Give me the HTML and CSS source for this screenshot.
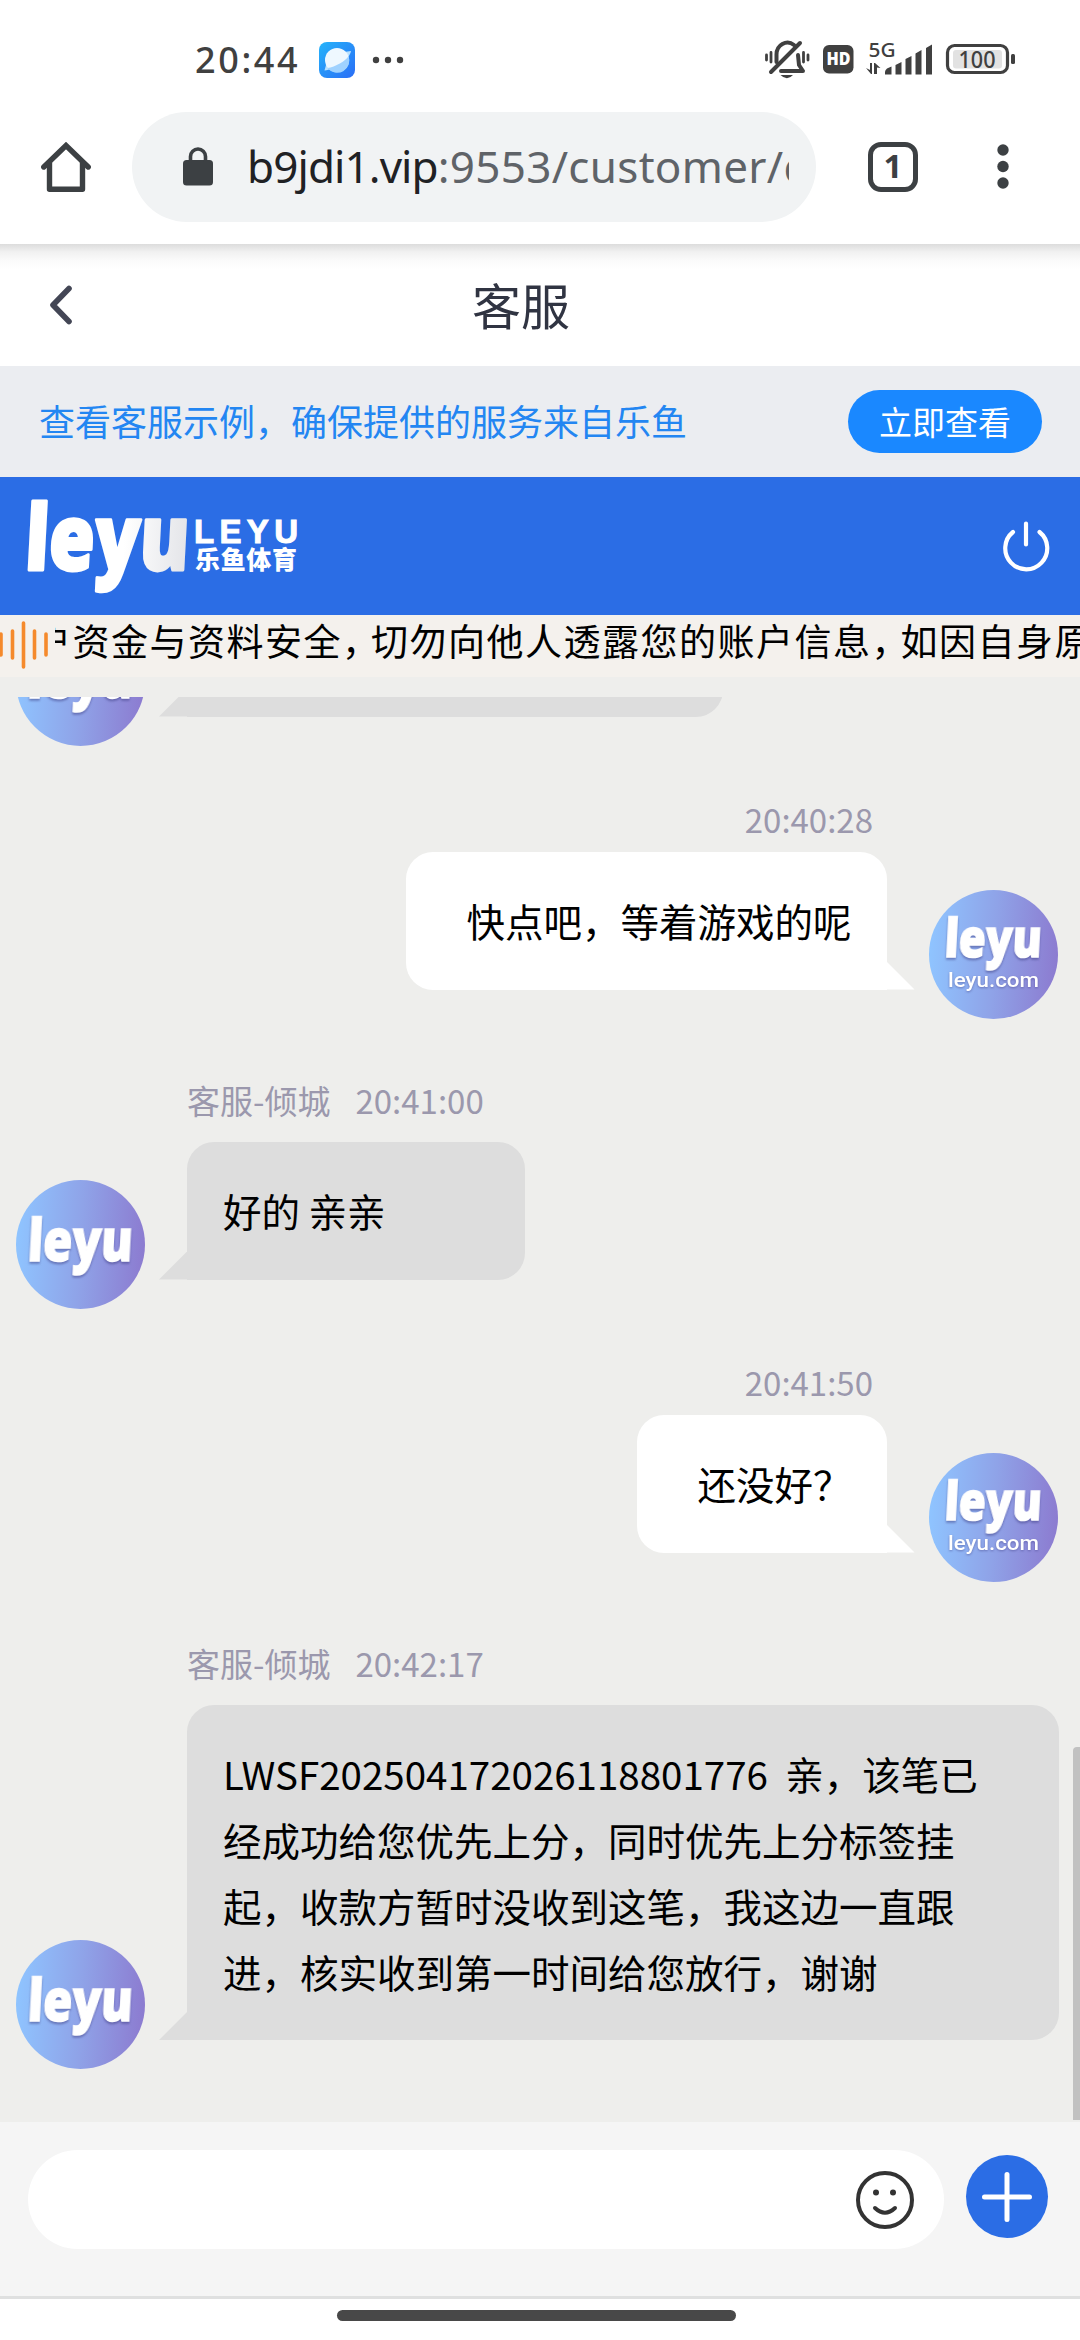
FILE: index.html
```html
<!DOCTYPE html>
<html lang="zh-CN">
<head>
<meta charset="utf-8">
<title>客服</title>
<link rel="stylesheet" href="styles.css">
</head>
<body>
<svg class="defs" width="0" height="0" aria-hidden="true">
  <defs>
    <linearGradient id="avatar-fill" x1="0" y1="0.5" x2="1" y2="0.56">
      <stop offset="0" stop-color="#8fc4ff"/>
      <stop offset="0.5" stop-color="#8fa3e8"/>
      <stop offset="1" stop-color="#8c7bd0"/>
    </linearGradient>
    <linearGradient id="app-fill" x1="0" y1="0" x2="1" y2="1">
      <stop offset="0" stop-color="#25b4fa"/>
      <stop offset="1" stop-color="#2a6df6"/>
    </linearGradient>
    <symbol id="avatar-agent" viewBox="0 0 129 129">
      <circle cx="64.5" cy="64.5" r="64.5" fill="url(#avatar-fill)"/>
      <g transform="translate(11 81) skewX(-3)"><text class="brand" font-size="58" textLength="105" lengthAdjust="spacingAndGlyphs">leyu</text></g>
    </symbol>
    <symbol id="avatar-user" viewBox="0 0 129 129">
      <circle cx="64.5" cy="64.5" r="64.5" fill="url(#avatar-fill)"/>
      <g transform="translate(15 67) skewX(-3)"><text class="brand" font-size="53" textLength="97" lengthAdjust="spacingAndGlyphs">leyu</text></g>
      <text class="brand-domain" x="19" y="97" font-size="21" textLength="91" lengthAdjust="spacingAndGlyphs">leyu.com</text>
    </symbol>
  </defs>
</svg>
<div class="screen">
  <header class="browser">
    <div class="status">
      <div class="status-left">
        <span class="clock">20:44</span>
        <svg class="app-icon" width="36" height="36" viewBox="0 0 36 36">
          <rect width="36" height="36" rx="8" fill="url(#app-fill)"/>
          <path d="M25 10L32 9C31 17 15 28 5.500 28.500L7 23Z" fill="#b9e1ff"/>
          <circle cx="18" cy="18" r="12" fill="#eef8ff"/>
          <path d="M8.500 26C16 25 27 19 29.500 14A12.200 12.200 0 0 1 8.500 26Z" fill="#9fd2ff"/>
        </svg>
        <svg width="32" height="8" viewBox="0 0 32 8" fill="#404040"><circle cx="4" cy="4" r="3.200"/><circle cx="16" cy="4" r="3.200"/><circle cx="28" cy="4" r="3.200"/></svg>
      </div>
      <svg class="status-right" width="252" height="40" viewBox="764 40 252 40" fill="#404040">
        <g fill="none" stroke="#404040" stroke-linecap="round" stroke-linejoin="round">
          <path d="M800 43L771 72" stroke-width="4"/>
          <path d="M776.500 62V55A11 12 0 0 1 794 45" stroke-width="4"/>
          <path d="M781 71H803L799 65L798 55" stroke-width="4"/>
          <path d="M766.500 55V60M771 52.500V62M803.500 52.500V62M808 55V60" stroke-width="2.800"/>
        </g>
        <path d="M780.500 75H793Q787 81.500 780.500 75Z"/>
        <rect x="823" y="45" width="30.500" height="28.500" rx="6"/>
        <text class="hd" x="826.500" y="65" textLength="24" lengthAdjust="spacingAndGlyphs">HD</text>
        <text class="net" x="868.500" y="57" textLength="27" lengthAdjust="spacingAndGlyphs">5G</text>
        <path d="M866 68L870 70V63H872V74H871ZM874 63H875L880.500 68L877 67.500V74H874ZM885 72Q885 70 887 68.500L891.500 66.500V74.500H885ZM895.500 65L901.500 62V74.500H895.500ZM905.500 59L911.500 56V74.500H905.500ZM915.500 53.500L921.500 50V74.500H915.500ZM926 48L932 44.500V74.500H926Z"/>
        <rect x="947.500" y="45.500" width="60" height="27" rx="7" fill="none" stroke="#404040" stroke-width="3.200"/>
        <rect x="953" y="50" width="49" height="18.500" rx="3" fill="#e2e2e2"/>
        <rect x="1011" y="54" width="4" height="10" rx="1.500"/>
        <text class="level" x="958.500" y="67.500" textLength="37" lengthAdjust="spacingAndGlyphs">100</text>
      </svg>
    </div>
    <div class="toolbar">
      <svg class="home" width="50" height="50" viewBox="0 0 50 50" fill="none" stroke="#3c4043" stroke-width="5.400" stroke-linejoin="round" stroke-linecap="round"><path d="M2.800 25L25 3.500L47.200 25" stroke-linejoin="miter"/><path d="M8.500 21V47.200H41.500V21"/></svg>
      <div class="omnibox">
        <svg width="30" height="39" viewBox="0 0 30 39"><rect y="13" width="30" height="25.500" rx="3.500" fill="#3c4043"/><path d="M7.500 15V9.500A7.500 7.500 0 0 1 22.500 9.500V15" fill="none" stroke="#3c4043" stroke-width="3.600"/></svg>
        <div class="url"><span class="host">b9jdi1.vip</span><span class="rest">:9553/customer/c</span></div>
      </div>
      <div class="tabs">1</div>
      <svg class="menu" width="12" height="46" viewBox="0 0 12 46" fill="#3c4043"><circle cx="6" cy="6" r="5.700"/><circle cx="6" cy="22.500" r="5.700"/><circle cx="6" cy="39" r="5.700"/></svg>
    </div>
  </header>

  <nav class="page-nav">
    <svg width="24" height="40" viewBox="0 0 24 40" fill="none" stroke="#434655" stroke-width="5.600" stroke-linecap="round" stroke-linejoin="round"><path d="M20 3.500L4 20L20 36.500"/></svg>
    <h1>客服</h1>
  </nav>

  <section class="verify">
    <p>查看客服示例，确保提供的服务来自乐鱼</p>
    <button type="button">立即查看</button>
  </section>

  <section class="brandbar">
    <svg class="logo" width="272" height="100" viewBox="26 496 272 100">
      <defs><linearGradient id="logo-fill"><stop offset="0" stop-color="#fff"/><stop offset="0.600" stop-color="#fff"/><stop offset="1" stop-color="#e3e4e8"/></linearGradient></defs>
      <g transform="translate(24 569.500) skewX(-3)"><text class="logo-word" font-size="91" textLength="164" lengthAdjust="spacingAndGlyphs" fill="url(#logo-fill)" stroke="url(#logo-fill)">leyu</text></g>
      <text class="logo-latin" x="194" y="543" textLength="104" lengthAdjust="spacing">LEYU</text>
      <text class="logo-cjk" x="195" y="569" textLength="102" lengthAdjust="spacing">乐鱼体育</text>
    </svg>
    <svg class="power" width="50" height="52" viewBox="0 0 50 52" fill="none" stroke="#fff" stroke-width="4.200" stroke-linecap="round"><path d="M25 3.500V24.500M12 12A21 21 0 1 0 38.500 12"/></svg>
  </section>

  <section class="notice">
    <svg width="50" height="48" viewBox="0 0 50 48" stroke="#f58a2c" stroke-width="3.600" stroke-linecap="round"><path d="M1 13V34M12.500 10V37M23.500 2V46M34.500 10V37M46 13V34"/></svg>
    <div class="ticker"><span>户资金与资料安全<i>，</i>切勿向他人透露您的账户信息<i>，</i>如因自身原</span></div>
  </section>

  <main class="chat">
    <article class="msg agent">
      <svg class="avatar"><use href="#avatar-agent"/></svg>
      <div class="body"><div class="bubble earlier"></div></div>
    </article>
    <article class="msg own">
      <div class="body"><div class="meta"><time>20:40:28</time></div><div class="bubble">快点吧，等着游戏的呢</div></div>
      <svg class="avatar"><use href="#avatar-user"/></svg>
    </article>
    <article class="msg agent">
      <svg class="avatar"><use href="#avatar-agent"/></svg>
      <div class="body"><div class="meta"><span>客服-倾城</span><time>20:41:00</time></div><div class="bubble">好的 亲亲</div></div>
    </article>
    <article class="msg own">
      <div class="body"><div class="meta"><time>20:41:50</time></div><div class="bubble">还没好？</div></div>
      <svg class="avatar"><use href="#avatar-user"/></svg>
    </article>
    <article class="msg agent">
      <svg class="avatar"><use href="#avatar-agent"/></svg>
      <div class="body"><div class="meta"><span>客服-倾城</span><time>20:42:17</time></div><div class="bubble">LWSF202504172026118801776&nbsp; 亲，该笔已经成功给您优先上分，同时优先上分标签挂起，收款方暂时没收到这笔，我这边一直跟进，核实收到第一时间给您放行，谢谢</div></div>
    </article>
    <div class="scrollbar"></div>
  </main>

  <footer class="composer">
    <div class="field">
      <svg width="58" height="58" viewBox="0 0 58 58" fill="none" stroke="#333" stroke-linecap="round"><circle cx="29" cy="29" r="27" stroke-width="4"/><path d="M19 37Q29 46.500 39 37" stroke-width="4"/><g fill="#333" stroke="none"><circle cx="20" cy="21.500" r="3"/><circle cx="37" cy="21.500" r="3"/></g></svg>
    </div>
    <button class="add" type="button"><svg width="50" height="50" viewBox="0 0 50 50" stroke="#fff" stroke-width="5" stroke-linecap="round"><path d="M25 2.500V47.500M2.500 25H47.500"/></svg></button>
  </footer>
  <div class="gesture"><div></div></div>
</div>
</body>
</html>
```
FILE: styles.css
```css
* { box-sizing: border-box; margin: 0; padding: 0; }
body {
  width: 1080px;
  height: 2340px;
  overflow: hidden;
  background: #fff;
  font-family: "Noto Sans CJK SC", sans-serif;
}
svg { display: block; flex: none; }
button { border: 0; font: inherit; }
.defs { position: absolute; }
.screen { display: flex; flex-direction: column; width: 1080px; height: 2340px; }

.browser { height: 244px; flex: none; }
.status {
  height: 112px;
  padding: 7px 64px 0 195px;
  display: flex;
  align-items: center;
  justify-content: space-between;
}
.status-left { display: flex; align-items: center; }
.clock { width: 124px; font: 500 36px/1 "Noto Sans", sans-serif; letter-spacing: 2.6px; color: #404040; }
.app-icon { margin-right: 17px; }
.status-right text { font-family: "Noto Sans", sans-serif; }
.status-right .hd { font: 800 17px "Open Sans", sans-serif; fill: #fff; }
.status-right .net { font-size: 19px; font-weight: 500; }
.status-right .level { font-size: 23px; font-weight: 500; }

.toolbar { height: 110px; display: flex; align-items: center; padding-left: 41px; }
.omnibox {
  width: 684px;
  height: 110px;
  margin-left: 41px;
  padding: 0 27px 0 51px;
  border-radius: 55px;
  background: #f1f3f4;
  display: flex;
  align-items: center;
}
.omnibox svg { margin-top: -2px; }
.url {
  flex: 1;
  margin: -2px 0 0 34px;
  overflow: hidden;
  white-space: nowrap;
  font: 400 44px/60px "Noto Sans", sans-serif;
}
.host { color: #202124; letter-spacing: -.9px; }
.rest { color: #5f6368; letter-spacing: .3px; }
.tabs {
  width: 50px;
  height: 50px;
  margin-left: 52px;
  border: 5.5px solid #3c4043;
  border-radius: 13px;
  color: #3c4043;
  font: 700 33px/38px "Noto Sans", sans-serif;
  text-align: center;
}
.menu { margin-left: 79px; }

.page-nav {
  height: 122px;
  flex: none;
  padding-left: 49px;
  display: flex;
  align-items: center;
  background: linear-gradient(#dcdcdc, #f1f1f1 8px, #fbfbfb 17px, #fff 25px);
}
.page-nav h1 { margin: -3px 0 0 399px; font-size: 49px; font-weight: 400; line-height: 70px; color: #303442; }

.verify {
  height: 111px;
  flex: none;
  padding: 0 38px 0 39px;
  display: flex;
  align-items: center;
  justify-content: space-between;
  background: #ebedf1;
}
.verify p { margin-top: -4px; font-size: 36px; line-height: 50px; color: #2386f2; }
.verify button { width: 194px; height: 63px; border-radius: 32px; background: #1a88ff; color: #fff; font-size: 33px; line-height: 63px; }

.brandbar {
  height: 138px;
  flex: none;
  padding: 0 29px 0 26px;
  display: flex;
  align-items: center;
  justify-content: space-between;
  background: #2b6de5;
}
.brand, .logo-word { font-family: "Open Sans", sans-serif; font-weight: 800; }
.brand { fill: #fff; stroke: #fff; stroke-width: 1.6; filter: drop-shadow(0 2px 1px rgba(60, 60, 130, .5)); }
.logo-word { stroke-width: 3; stroke-linejoin: round; }
.brand-domain { font-family: Roboto, sans-serif; font-weight: 500; fill: #fff; filter: drop-shadow(0 1px 1px rgba(60, 60, 130, .5)); }
.logo-latin { font: 700 33px "Liberation Sans", sans-serif; fill: #fff; stroke: #fff; stroke-width: 1; }
.logo-cjk { font: 900 25px "Noto Sans CJK SC", sans-serif; fill: #fff; }

.notice { height: 62px; flex: none; display: flex; padding-top: 6px; background: #f4f1ed; }
.ticker { flex: 1; margin: -1px 0 0 5px; overflow: hidden; white-space: nowrap; font-size: 37px; line-height: 40px; letter-spacing: 1.5px; color: #000; }
.ticker span { display: inline-block; margin-left: -21px; }
.ticker i { font-style: normal; letter-spacing: -8px; }

.chat {
  position: relative;
  flex: 1;
  min-height: 0;
  overflow: hidden;
  padding-bottom: 53px;
  display: flex;
  flex-direction: column;
  justify-content: flex-end;
  background: #eeeeec;
  border-top: 20px solid #eeeeec;
}
.msg { flex: none; display: flex; align-items: flex-end; }
.avatar { width: 129px; height: 129px; }
.body { margin-bottom: 29px; }
.meta { height: 40px; display: flex; gap: 25px; font-size: 33px; line-height: 37px; color: #9b98ad; }
.bubble {
  position: relative;
  min-height: 137.5px;
  font-size: 38.5px;
  line-height: 66px;
  color: #000;
}
.bubble::after { content: ""; position: absolute; bottom: 0; width: 28px; height: 28px; }
.agent { margin-top: 63.5px; padding-left: 15.5px; }
.agent .body { margin-left: 42.5px; }
.agent .meta { margin-bottom: 20px; }
.agent .bubble {
  width: max-content;
  min-width: 338px;
  max-width: 872px;
  padding: 35px 72px 36px 36px;
  border-radius: 27px 27px 27px 0;
  background: #ddd;
}
.agent .bubble::after { right: 100%; background: inherit; clip-path: polygon(100% 0, 100% 100%, 0 100%); }
.agent .earlier { width: 536px; }
.own { margin-top: 55.5px; padding-right: 22px; justify-content: flex-end; }
.own .body { margin-right: 42.5px; }
.own .meta { height: 39px; margin-bottom: 12px; padding-right: 13.5px; line-height: 36px; justify-content: flex-end; }
.own .bubble { width: max-content; margin-left: auto; padding: 35px 35px 36px 60px; border-radius: 27px 27px 0 27px; background: #fff; }
.own .bubble::after { left: 100%; background: inherit; clip-path: polygon(0 0, 100% 100%, 0 100%); }
.scrollbar { position: absolute; right: 0; bottom: 2px; width: 7px; height: 373px; border-radius: 4px 0 0 0; background: #c1c1c1; }

.composer {
  height: 177px;
  flex: none;
  padding: 28px 32px 0 28px;
  display: flex;
  justify-content: space-between;
  background: #f5f5f5;
  border-bottom: 3px solid #dfe0e0;
}
.field { width: 916px; height: 99px; padding-right: 30px; border-radius: 50px; background: #fff; display: flex; align-items: center; justify-content: flex-end; }
.add { width: 82px; height: 83px; margin-top: 5px; border-radius: 50%; background: #2b6de5; display: flex; align-items: center; justify-content: center; }
.gesture { height: 41px; flex: none; padding-top: 11px; }
.gesture div { width: 399px; height: 11px; margin-left: 337px; border-radius: 6px; background: #484848; }
```
